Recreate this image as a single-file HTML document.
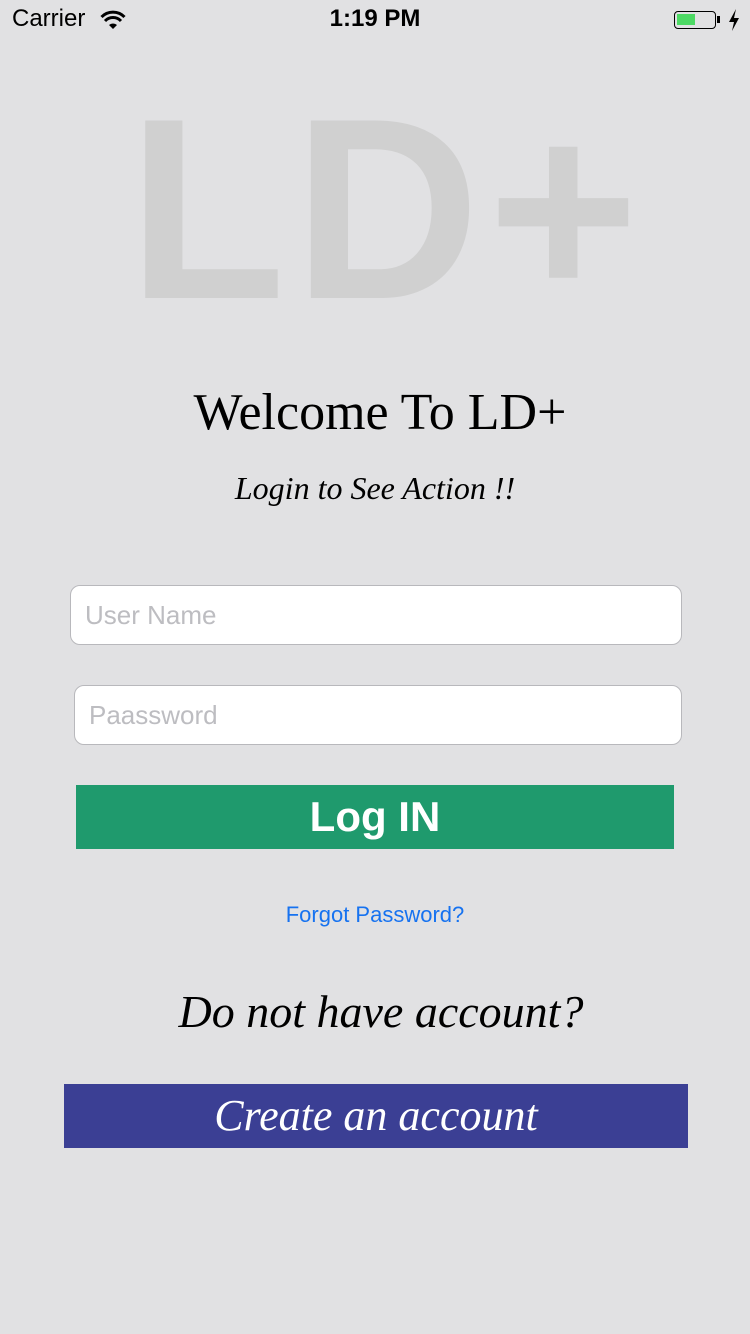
<!DOCTYPE html>
<html><head><meta charset="utf-8"><style>
body{margin:0;width:750px;height:1334px;background:#e1e1e3;position:relative;overflow:hidden;font-family:"Liberation Sans",sans-serif}
.a{position:absolute}
.inp{position:absolute;background:#fff;border:1px solid #b8b8bc;border-radius:10px;box-sizing:border-box;color:#bdbdc1;font-size:26px;line-height:58px;padding-left:14px}
</style></head><body>
<div class="a" style="left:12px;top:5px;font-size:24px;">Carrier</div>
<svg class="a" style="left:100px;top:10px" width="26" height="20" viewBox="0 0 26 20"><path d="M13 19 L9 15 A6 6 0 0 1 17 15 Z" fill="#000"/><path d="M5 11 A11 11 0 0 1 21 11" stroke="#000" stroke-width="3" fill="none"/><path d="M1.5 7 A16 16 0 0 1 24.5 7" stroke="#000" stroke-width="3" fill="none"/></svg>
<div class="a" style="left:0;width:750px;top:5px;text-align:center;font-size:24px;font-weight:bold">1:19 PM</div>
<div class="a" style="left:674px;top:11px;width:42px;height:18px;border:1.5px solid #000;border-radius:4px;box-sizing:border-box"><div style="margin:2px;width:18px;height:11px;background:#4cd964"></div></div>
<div class="a" style="left:717px;top:16px;width:3px;height:7px;background:#000"></div>
<svg class="a" style="left:728px;top:9px" width="12" height="22" viewBox="0 0 12 22"><path d="M8 0 L1 13 H6 L4 22 L11 9 H6 Z" fill="#000"/></svg>
<div class="a" style="left:128px;top:80px;font-size:258px;font-weight:bold;color:#d0d0d0;letter-spacing:8px;line-height:258px">LD+</div>
<div class="a" style="left:0;width:760px;top:383px;text-align:center;font-family:'Liberation Serif',serif;font-size:52px">Welcome To LD+</div>
<div class="a" style="left:0;width:750px;top:470px;text-align:center;font-family:'Liberation Serif',serif;font-style:italic;font-size:32px">Login to See Action !!</div>
<div class="inp" style="left:70px;top:585px;width:612px;height:60px">User Name</div>
<div class="inp" style="left:74px;top:685px;width:608px;height:60px">Paassword</div>
<div class="a" style="left:76px;top:785px;width:598px;height:64px;background:#1f9a6d;color:#fff;text-align:center;font-size:42px;font-weight:bold;line-height:64px">Log IN</div>
<div class="a" style="left:0;width:750px;top:902px;text-align:center;color:#1672f0;font-size:22px">Forgot Password?</div>
<div class="a" style="left:0;width:762px;top:985px;text-align:center;font-family:'Liberation Serif',serif;font-style:italic;font-size:46px">Do not have account?</div>
<div class="a" style="left:64px;top:1084px;width:624px;height:64px;background:#3b3f94;color:#fff;text-align:center;font-family:'Liberation Serif',serif;font-style:italic;font-size:44px;line-height:64px">Create an account</div>
</body></html>
